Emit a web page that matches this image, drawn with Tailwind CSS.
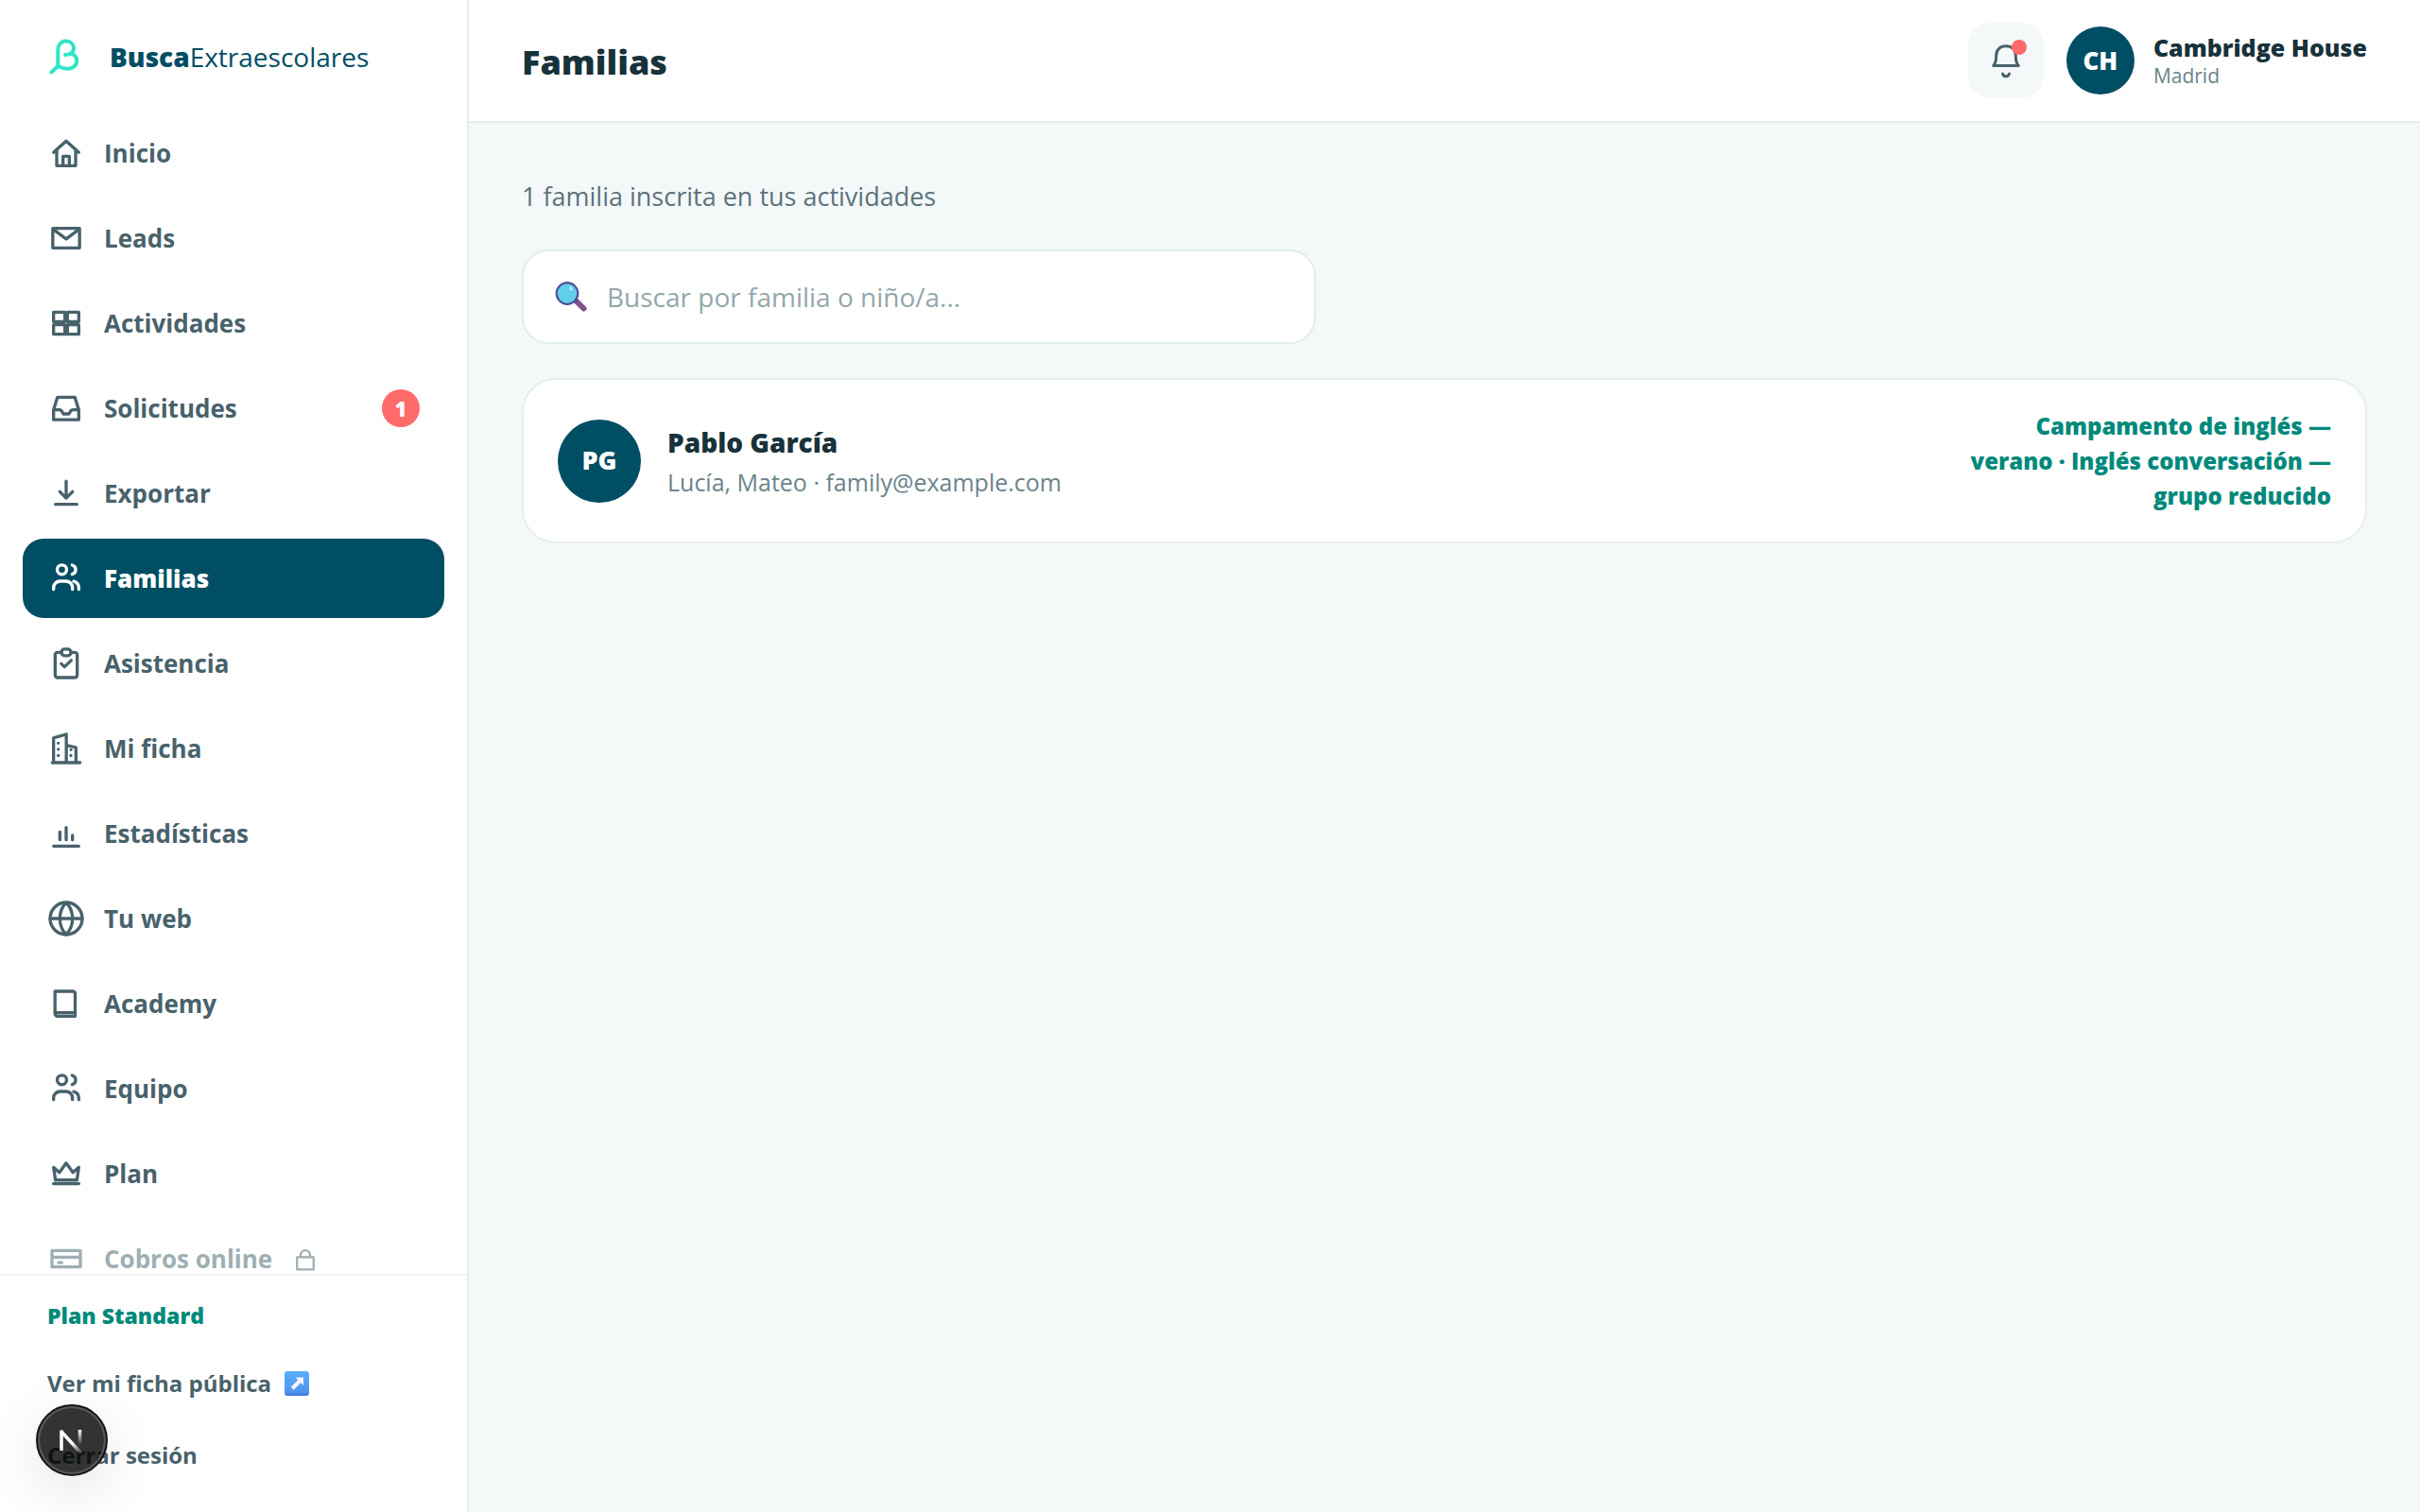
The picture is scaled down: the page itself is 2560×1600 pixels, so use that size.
<!DOCTYPE html>
<html lang="es">
<head>
  <meta charset="utf-8">
  <meta name="viewport" content="width=device-width, initial-scale=1">
  <title>Familias · BuscaExtraescolares</title>
  <script src="https://cdn.jsdelivr.net/npm/@tailwindcss/browser@4"></script>
</head>
<body class="flex h-screen bg-[#f4f8f9] font-['Open_Sans','Noto_Sans',sans-serif] text-[#17323a]">

  <!-- SIDEBAR -->
  <aside class="flex w-[496px] shrink-0 flex-col border-r-2 border-[#e4eeed] bg-white">
    <a href="#" class="flex h-[120px] shrink-0 items-center gap-8 pl-[50px] text-[#004e63]">
      <svg class="h-10 w-[34px] shrink-0" viewBox="0 0 34 40" fill="none" stroke="#2ee6c5" stroke-width="4" stroke-linecap="round" stroke-linejoin="round">
        <path d="M4.300 36.500l7-6.500V13c0-5.500 3.200-9.500 8.500-9.500 4.800 0 8.200 3.200 8.200 7.500 0 4-3 7-9 7M24.300 16.800c4.200.5 6.900 3.500 6.900 7.400 0 5-4 8.500-9 8.500-4 0-7-.8-10.900-2.700"/>
      </svg>
      <span class="text-[28px] font-medium"><b class="font-extrabold">Busca</b>Extraescolares</span>
    </a>

    <nav class="flex min-h-0 flex-1 flex-col gap-1.5 overflow-hidden px-6 text-[26px] font-bold text-[#48626b]">
      <a href="#" class="flex h-[84px] shrink-0 items-center gap-5 rounded-[22px] px-[26px]">
        <svg class="size-10 shrink-0" viewBox="0 0 24 24" fill="none" stroke="currentColor" stroke-width="2" stroke-linecap="round" stroke-linejoin="round"><path d="M4 11.500L12 4.300l8 7.200M6 10.200V20h12v-9.800M10 20v-6h4v6"/></svg>
        Inicio
      </a>
      <a href="#" class="flex h-[84px] shrink-0 items-center gap-5 rounded-[22px] px-[26px]">
        <svg class="size-10 shrink-0" viewBox="0 0 24 24" fill="none" stroke="currentColor" stroke-width="2" stroke-linecap="round" stroke-linejoin="round"><path d="M3.500 5.800h17v12.400h-17zM4 6.500l8 6 8-6"/></svg>
        Leads
      </a>
      <a href="#" class="flex h-[84px] shrink-0 items-center gap-5 rounded-[22px] px-[26px]">
        <svg class="size-10 shrink-0" viewBox="0 0 24 24" fill="none" stroke="currentColor" stroke-width="2" stroke-linecap="round" stroke-linejoin="round"><path d="M4 5h7.200v6H4zM12.800 5H20v6h-7.200zM4 13h7.200v6H4zM12.800 13H20v6h-7.200z"/></svg>
        Actividades
      </a>
      <a href="#" class="flex h-[84px] shrink-0 items-center gap-5 rounded-[22px] px-[26px]">
        <svg class="size-10 shrink-0" viewBox="0 0 24 24" fill="none" stroke="currentColor" stroke-width="2" stroke-linecap="round" stroke-linejoin="round"><path d="M4 13l2.500-8h11L20 13v6.300H4zM4 13h4l1 .5 1.200 2.100h3.600L15 13.500l1-.5h4"/></svg>
        Solicitudes
        <span class="ml-auto flex size-10 items-center justify-center rounded-full bg-[#ff6b6b] text-[22px] font-extrabold text-white">1</span>
      </a>
      <a href="#" class="flex h-[84px] shrink-0 items-center gap-5 rounded-[22px] px-[26px]">
        <svg class="size-10 shrink-0" viewBox="0 0 24 24" fill="none" stroke="currentColor" stroke-width="2" stroke-linecap="round" stroke-linejoin="round"><path d="M12 4.300V15M8 11l4 4 4-4M5.200 19h13.600"/></svg>
        Exportar
      </a>
      <a href="#" aria-current="page" class="flex h-[84px] shrink-0 items-center gap-5 rounded-[22px] bg-[#004e63] px-[26px] font-extrabold text-white">
        <svg class="size-10 shrink-0" viewBox="0 0 24 24" fill="none" stroke="currentColor" stroke-width="2" stroke-linecap="round" stroke-linejoin="round"><circle cx="9.300" cy="6.500" r="3"/><path d="M4 19v-1c0-2.400 1.800-4.200 4.200-4.200h3.600c2.400 0 4.200 1.800 4.200 4.200v1M15.800 3.600a3 3 0 0 1 0 5.800M16.800 13.900c1.900.5 3.200 2.200 3.200 4.200v.9"/></svg>
        Familias
      </a>
      <a href="#" class="flex h-[84px] shrink-0 items-center gap-5 rounded-[22px] px-[26px]">
        <svg class="size-10 shrink-0" viewBox="0 0 24 24" fill="none" stroke="currentColor" stroke-width="2" stroke-linecap="round" stroke-linejoin="round"><path d="M9 5H6.500A1.500 1.500 0 0 0 5 6.500v13A1.500 1.500 0 0 0 6.500 21h11a1.500 1.500 0 0 0 1.500-1.500v-13A1.500 1.500 0 0 0 17.500 5H15"/><rect x="9" y="2.900" width="6" height="4.200" rx="2"/><path d="M8.900 12.200l2 2 4.300-4.100"/></svg>
        Asistencia
      </a>
      <a href="#" class="flex h-[84px] shrink-0 items-center gap-5 rounded-[22px] px-[26px]">
        <svg class="size-10 shrink-0" viewBox="0 0 24 24" fill="none" stroke="currentColor" stroke-width="2" stroke-linecap="round" stroke-linejoin="round"><path d="M3.200 21h17.600M4 21V5.300L12.100 3v18M12.100 9.900l6.100 1.500V21M7 8.600h.01M7 12.500h.01M7 16.500h.01M15 12.800h.01M15 16.500h.01"/></svg>
        Mi ficha
      </a>
      <a href="#" class="flex h-[84px] shrink-0 items-center gap-5 rounded-[22px] px-[26px]">
        <svg class="size-10 shrink-0" viewBox="0 0 24 24" fill="none" stroke="currentColor" stroke-width="2" stroke-linecap="round" stroke-linejoin="round"><path d="M4 20h16M8 16v-5M12 16V8.200M16 16v-2.800"/></svg>
        Estadísticas
      </a>
      <a href="#" class="flex h-[84px] shrink-0 items-center gap-5 rounded-[22px] px-[26px]">
        <svg class="size-10 shrink-0" viewBox="0 0 24 24" fill="none" stroke="currentColor" stroke-width="2" stroke-linecap="round" stroke-linejoin="round"><circle cx="12" cy="12" r="10.200"/><path d="M1.800 12h20.400M12 1.800c2.900 3 4 6.600 4 10.200s-1.100 7.200-4 10.200c-2.900-3-4-6.600-4-10.200s1.100-7.200 4-10.200z"/></svg>
        Tu web
      </a>
      <a href="#" class="flex h-[84px] shrink-0 items-center gap-5 rounded-[22px] px-[26px]">
        <svg class="size-10 shrink-0" viewBox="0 0 24 24" fill="none" stroke="currentColor" stroke-width="2" stroke-linecap="round" stroke-linejoin="round"><path d="M4.900 4.200h11.300a1.500 1.500 0 0 1 1.500 1.500V20H6.400a1.500 1.500 0 0 1-1.500-1.500zM4.900 17.800h12.800"/></svg>
        Academy
      </a>
      <a href="#" class="flex h-[84px] shrink-0 items-center gap-5 rounded-[22px] px-[26px]">
        <svg class="size-10 shrink-0" viewBox="0 0 24 24" fill="none" stroke="currentColor" stroke-width="2" stroke-linecap="round" stroke-linejoin="round"><circle cx="9.300" cy="6.500" r="3"/><path d="M4 19v-1c0-2.400 1.800-4.200 4.200-4.200h3.600c2.400 0 4.200 1.800 4.200 4.200v1M15.800 3.600a3 3 0 0 1 0 5.800M16.800 13.900c1.900.5 3.200 2.200 3.200 4.200v.9"/></svg>
        Equipo
      </a>
      <a href="#" class="flex h-[84px] shrink-0 items-center gap-5 rounded-[22px] px-[26px]">
        <svg class="size-10 shrink-0" viewBox="0 0 24 24" fill="none" stroke="currentColor" stroke-width="2" stroke-linecap="round" stroke-linejoin="round"><path d="M4 8l3.700 3.200L12 5.300l4.300 5.900L20 8l-1.200 8H5.200zM4 18.300h16"/></svg>
        Plan
      </a>
      <a href="#" aria-disabled="true" class="flex h-[84px] shrink-0 items-center gap-5 rounded-[22px] px-[26px] text-[#9eafb3]">
        <svg class="size-10 shrink-0" viewBox="0 0 24 24" fill="none" stroke="currentColor" stroke-width="2" stroke-linecap="round" stroke-linejoin="round"><path d="M3 6.800h18v10.400H3zM3 11h18M7.200 14.500h2"/></svg>
        Cobros online
        <svg class="size-[30px] shrink-0" viewBox="0 0 24 24" fill="none" stroke="currentColor" stroke-width="1.800" stroke-linecap="round" stroke-linejoin="round"><path d="M5 10.600h14v10.500H5zM8 10.600V8.800a4 4 0 0 1 8 0v1.800"/></svg>
      </a>
    </nav>

    <div class="flex h-[252px] shrink-0 flex-col items-start border-t-2 border-[#edf4f4] pl-[50px] pt-[26px] text-[24px] font-bold text-[#48626b]">
      <p class="text-[23px] leading-8 font-extrabold text-[#00897b]">Plan Standard</p>
      <a href="#" class="mt-9 flex items-center gap-3.5 leading-10">
        Ver mi ficha pública
        <svg class="size-[26px]" viewBox="0 0 26 26">
          <defs><linearGradient id="arrowBox" x1="0" y1="0" x2="0" y2="1"><stop offset="0" stop-color="#5aaefc"/><stop offset=".85" stop-color="#4f95ee"/><stop offset="1" stop-color="#3d70d8"/></linearGradient></defs>
          <rect width="26" height="26" rx="3" fill="url(#arrowBox)"/>
          <path d="M11.500 6.500h8.500v8.500l-2.800-2.700-7.500 7.500-3-3 7.500-7.500z" fill="#f8f2ff"/>
        </svg>
      </a>
      <button type="button" class="mt-9 leading-10 font-bold">Cerrar sesión</button>
    </div>
  </aside>

  <div class="flex min-w-0 flex-1 flex-col">

    <!-- TOP BAR -->
    <header class="flex h-[130px] shrink-0 items-center justify-between border-b-2 border-[#e4eeed] bg-white px-14">
      <h1 class="pt-1 text-[36px] font-extrabold">Familias</h1>
      <div class="flex items-center">
        <button type="button" aria-label="Notificaciones" class="relative flex size-20 items-center justify-center rounded-3xl bg-[#f4f8f9] text-[#48626b]">
          <svg class="size-10" viewBox="0 0 24 24" fill="none" stroke="currentColor" stroke-width="1.8" stroke-linecap="round" stroke-linejoin="round"><path d="M4 15.300h16c-1.500-1.500-1.800-3.700-1.800-6.300 0-3.700-2.500-6.200-6.200-6.200S5.800 5.300 5.800 9c0 2.600-.3 4.800-1.800 6.300zM9.900 20.500c.4 1.100 1.100 1.600 2.100 1.600s1.700-.5 2.100-1.600"/></svg>
          <span class="absolute top-[18px] right-[18px] size-4 rounded-full bg-[#ff6b6b]"></span>
        </button>
        <span class="ml-6 flex size-18 items-center justify-center rounded-full bg-[#004e63] text-[26px] font-extrabold text-white">CH</span>
        <div class="ml-5">
          <p class="text-[25px] leading-8 font-extrabold">Cambridge House</p>
          <p class="text-[21px] leading-7 font-medium text-[#6b838b]">Madrid</p>
        </div>
      </div>
    </header>

    <main class="flex flex-col px-14 pt-14">
      <p class="text-[27px] leading-11 font-medium text-[#5b737b]">1 familia inscrita en tus actividades</p>

      <label class="mt-[34px] flex h-[100px] w-full max-w-[840px] items-center gap-5 rounded-[28px] border-2 border-[#e2edec] bg-white px-8">
        <svg class="size-9 shrink-0" viewBox="0 0 36 36" aria-hidden="true">
          <path d="M23 22l8.500 8.500" stroke="#84508f" stroke-width="6" stroke-linecap="round"/>
          <path d="M20.500 20.500l3 3" stroke="#5d3a77" stroke-width="4"/>
          <circle cx="14" cy="14.500" r="11.300" fill="#63cdec" stroke="#4d5596" stroke-width="2.200"/>
          <ellipse cx="18" cy="9.500" rx="1.500" ry="2.500" fill="#b5ecfa" transform="rotate(-30 18 9.500)"/>
        </svg>
        <input type="text" placeholder="Buscar por familia o niño/a..." aria-label="Buscar por familia o niño/a" class="min-w-0 flex-1 bg-transparent text-[28px] font-medium outline-none placeholder:text-[#94a6ab]">
      </label>

      <a href="#" class="mt-9 flex items-center rounded-[36px] border-2 border-[#e6efee] bg-white px-9 py-[30px]">
        <span class="flex size-[88px] shrink-0 items-center justify-center rounded-full bg-[#004e63] text-[27px] font-extrabold text-white">PG</span>
        <span class="ml-7 flex flex-1 flex-col">
          <span class="text-[28px] leading-11 font-extrabold">Pablo García</span>
          <span class="text-[25px] leading-10 font-medium text-[#6b838b]">Lucía, Mateo · family@example.com</span>
        </span>
        <span class="w-[400px] text-right text-[24px] leading-[37px] font-extrabold text-[#00897b]">Campamento de inglés — verano · Inglés conversación — grupo reducido</span>
      </a>
    </main>
  </div>

  <!-- dev tools badge -->
  <button type="button" aria-label="Open Next.js Dev Tools" class="fixed bottom-[38px] left-[38px] flex size-19 items-center justify-center rounded-full border-2 border-[#171717] bg-black/80 shadow-[inset_0_0_0_2px_#5a5a5a,0_16px_64px_-8px_rgba(0,0,0,0.18)]">
    <svg class="size-10" viewBox="0 0 40 40" fill="none">
      <defs>
        <linearGradient id="nDiag" x1="22" y1="22" x2="31" y2="34" gradientUnits="userSpaceOnUse"><stop stop-color="#fff"/><stop offset="1" stop-color="#fff" stop-opacity="0"/></linearGradient>
        <linearGradient id="nBar" x1="28" y1="9" x2="28" y2="25" gradientUnits="userSpaceOnUse"><stop stop-color="#fff"/><stop offset="1" stop-color="#fff" stop-opacity="0"/></linearGradient>
      </defs>
      <path d="M9 31V9.500" stroke="#fff" stroke-width="3.500"/>
      <path d="M8.500 10.500l22 24" stroke="url(#nDiag)" stroke-width="3.500"/>
      <path d="M28.500 9v16" stroke="url(#nBar)" stroke-width="3.500"/>
    </svg>
  </button>
</body>
</html>
